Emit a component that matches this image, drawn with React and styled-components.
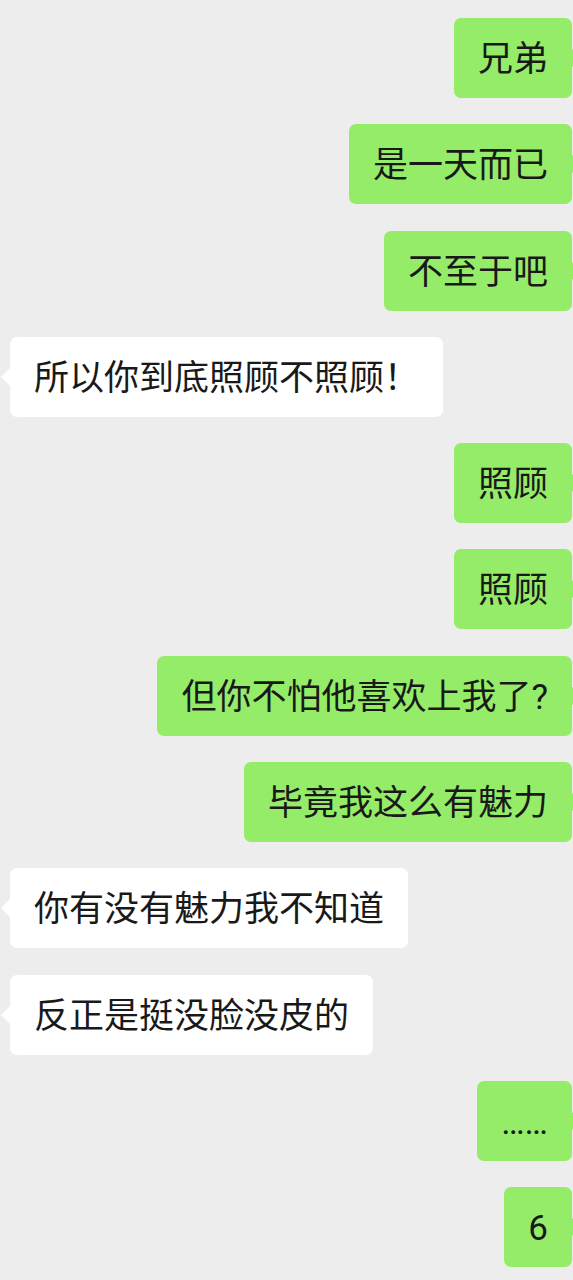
import styled, { createGlobalStyle } from 'styled-components'

const GlobalStyle = createGlobalStyle`
  html, body {
    margin: 0;
    padding: 0;
    background: #ededed;
  }
  body {
    font-family: Roboto, "Noto Sans CJK SC", sans-serif;
  }
`

const ChatList = styled.div`
  width: 573px;
  min-height: 1280px;
  box-sizing: border-box;
  padding: 18px 0 0;
  display: flex;
  flex-direction: column;
  gap: 26.3px;
  background: #ededed;
  overflow: hidden;
`

const Row = styled.div`
  display: flex;
  justify-content: ${p => (p.$mine ? 'flex-end' : 'flex-start')};
  padding: ${p => (p.$mine ? '0 1px 0 0' : '0 0 0 10px')};
`

const Bubble = styled.div`
  position: relative;
  box-sizing: border-box;
  height: 80px;
  padding: 4px 24px 0;
  display: flex;
  align-items: center;
  border-radius: 7px;
  font-size: 35px;
  line-height: 48px;
  color: #191919;
  white-space: nowrap;
  background: ${p => (p.$mine ? '#95ec69' : '#ffffff')};

  &::after {
    content: '';
    position: absolute;
    top: 50%;
    margin-top: -9px;
    border-top: 9px solid transparent;
    border-bottom: 9px solid transparent;
    ${p =>
      p.$mine
        ? 'right: -9px; border-left: 9px solid #95ec69;'
        : 'left: -9px; border-right: 9px solid #ffffff;'}
  }
`

const messages = [
  { mine: true, text: '兄弟' },
  { mine: true, text: '是一天而已' },
  { mine: true, text: '不至于吧' },
  { mine: false, text: '所以你到底照顾不照顾！' },
  { mine: true, text: '照顾' },
  { mine: true, text: '照顾' },
  { mine: true, text: '但你不怕他喜欢上我了?' },
  { mine: true, text: '毕竟我这么有魅力' },
  { mine: false, text: '你有没有魅力我不知道' },
  { mine: false, text: '反正是挺没脸没皮的' },
  { mine: true, text: '……' },
  { mine: true, text: '6' },
]

export default function App() {
  return (
    <>
      <GlobalStyle />
      <ChatList>
        {messages.map((m, i) => (
          <Row key={i} $mine={m.mine}>
            <Bubble $mine={m.mine}>{m.text}</Bubble>
          </Row>
        ))}
      </ChatList>
    </>
  )
}
